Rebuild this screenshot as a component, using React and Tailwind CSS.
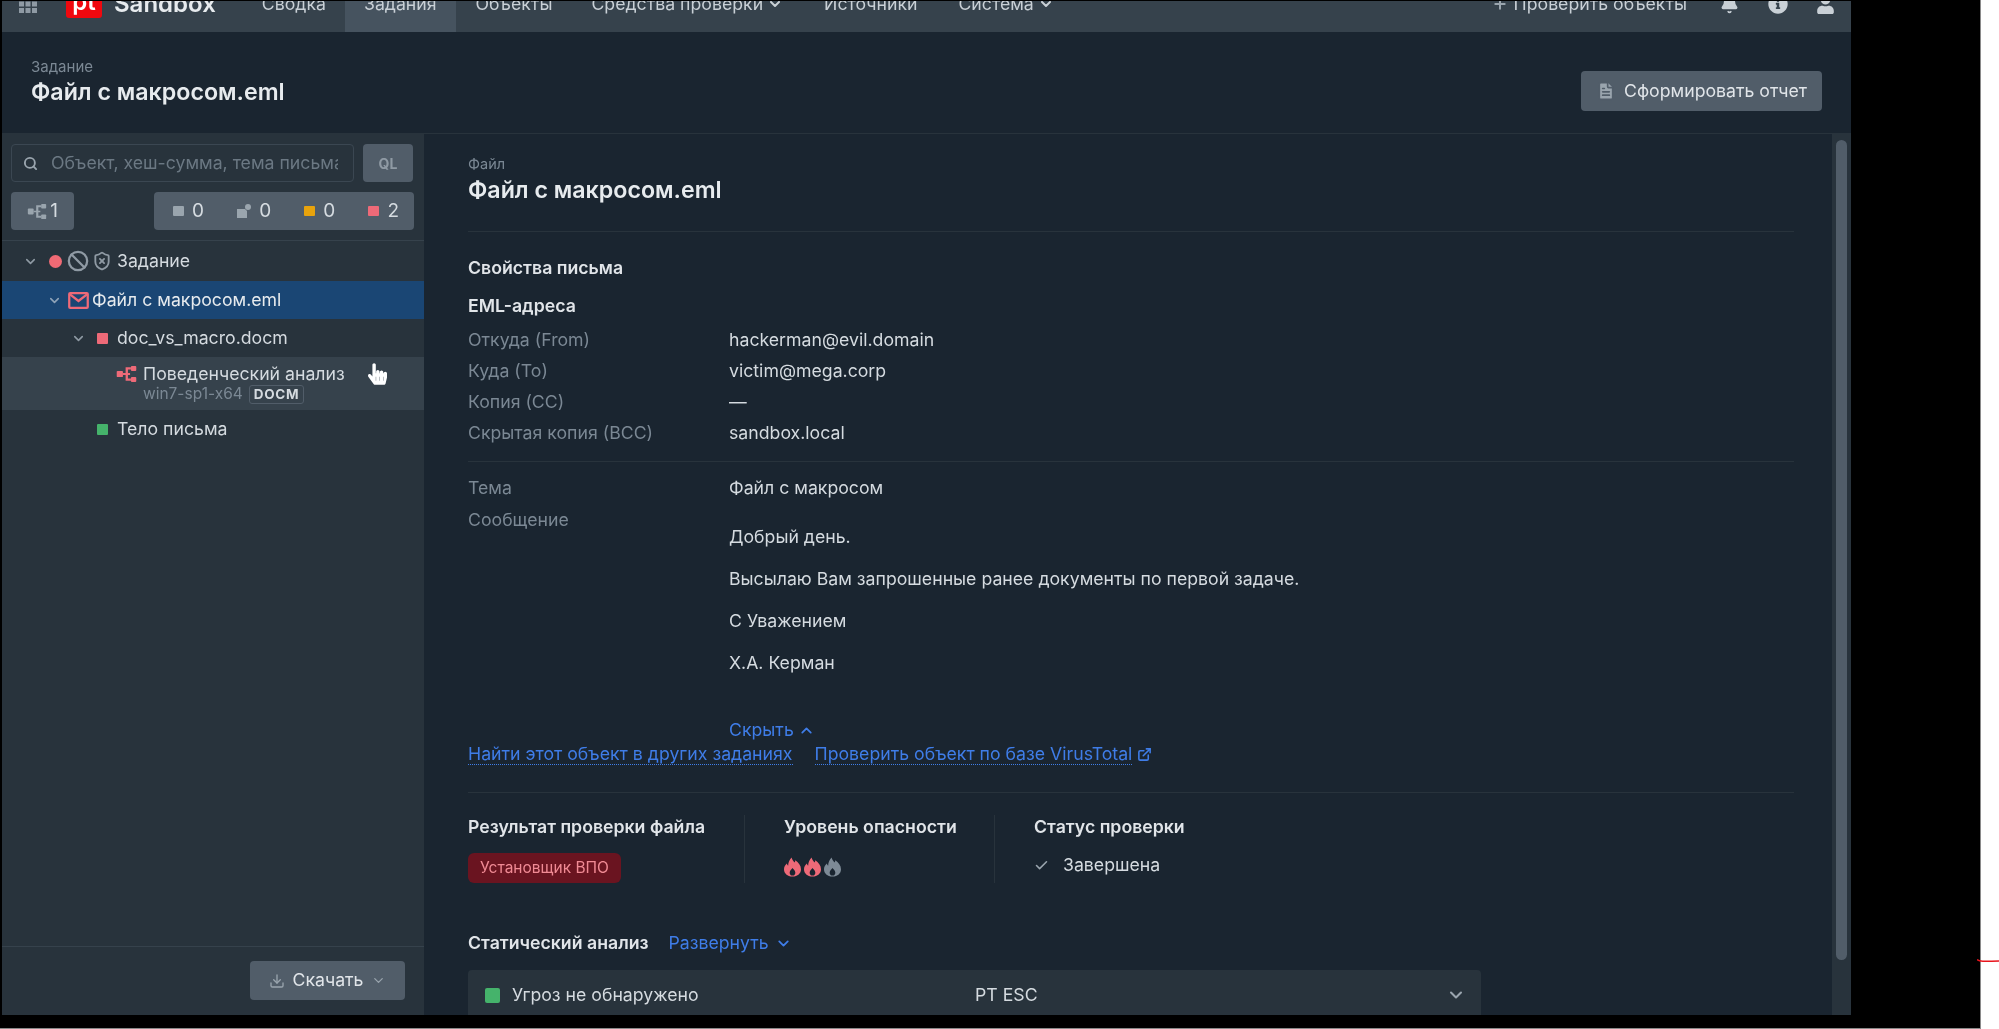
import React from 'react'
import { Ban, Bell, Check, ChevronDown, ChevronUp, ExternalLink, FileText, Plus, Search, ShieldX, Download } from 'lucide-react'
import { FaHandPointer, FaUser, FaInfoCircle } from 'react-icons/fa'

function BranchIcon({ className }) {
    return (
        <svg viewBox="0 0 22 18" className={className} fill="currentColor">
            <rect x="0" y="5.5" width="7" height="7" rx="1" />
            <rect x="16" y="0" width="6" height="5.5" rx="1" />
            <rect x="16" y="12.5" width="6" height="5.5" rx="1" />
            <path d="M7 8h3V1.5h6v2.4h-3.4V8H15v2h-2.4v4.1H16v2.4h-6V10H7z" />
        </svg>
    )
}

function GridIcon({ className }) {
    return (
        <svg viewBox="0 0 18 18" className={className} fill="currentColor">
            <rect x="0" y="0" width="5" height="5" />
            <rect x="6.5" y="0" width="5" height="5" />
            <rect x="13" y="0" width="5" height="5" />
            <rect x="0" y="6.5" width="5" height="5" />
            <rect x="6.5" y="6.5" width="5" height="5" />
            <rect x="13" y="6.5" width="5" height="5" />
            <rect x="0" y="13" width="5" height="5" />
            <rect x="6.5" y="13" width="5" height="5" />
            <rect x="13" y="13" width="5" height="5" />
        </svg>
    )
}

function MailIcon({ className }) {
    return (
        <svg viewBox="0 0 22 18" className={className} fill="none" stroke="currentColor">
            <rect x="1.2" y="1.2" width="19.6" height="15.6" rx="1" strokeWidth="2.4" />
            <path d="M2 2.5l9 7 9-7" strokeWidth="2.4" />
        </svg>
    )
}

function FlameIcon({ className }) {
    return (
        <svg viewBox="0 0 18 20" className={className} fill="currentColor">
            <path fillRule="evenodd" d="M8 0c.6 2.4 1.8 3.8 3.4 5.2.3-.9.5-1.5.5-2.4C15.300 5.200 18 8.300 18 12.300 18 16.700 14.500 20 9 20S0 16.700 0 12.300c0-2.600 1.300-4.500 3-6 .3 1 .6 1.700 1.400 2.300C4.500 5.300 5.800 2.200 8 0zM9 11c-1 1.400-3 2.700-3 5 0 1.400 1 2.500 1.800 3h2.400c.8-.5 1.800-1.600 1.800-3 0-2.300-2-3.600-3-5z" />
        </svg>
    )
}

function NavItem({ label, active, caret, className }) {
    return (
        <div className={`flex h-full items-center gap-1 text-[17.7px] ${active ? 'bg-[#46535f]' : ''} ${className}`}>
            <span>{label}</span>
            {caret && <ChevronDown className="h-4 w-4" strokeWidth={3} />}
        </div>
    )
}

function EmlRow({ label, value }) {
    return (
        <div className="flex h-[31px] items-center text-[17.7px]">
            <span className="w-[261px] text-[#7b8894]">{label}</span>
            <span className="text-[#d5dbe0]">{value}</span>
        </div>
    )
}

function Counter({ children, value }) {
    return (
        <div className="flex items-center gap-[8px]">
            {children}
            <span className="text-[19px] text-[#d5dbe0]">{value}</span>
        </div>
    )
}

export default function App() {
    return (
        <div className="relative flex h-[1029px] w-[1999px] overflow-hidden bg-white font-['Inter',sans-serif]">
            <div className="h-[1029px] w-[1981px] border-r border-b border-[#8a8a8a] bg-black pt-px pl-[2px]">
                <div className="flex h-[1014px] w-[1849px] flex-col overflow-hidden bg-[#1a2530] blur-[0.6px]">
                    <div className="h-[31px] shrink-0 overflow-hidden bg-[#36424c] text-[#c9d0d6]">
                        <div className="-mt-[26px] flex h-[58px] items-center">
                            <GridIcon className="ml-[17px] h-[18px] w-[18px] text-[#8f9aa4]" />
                            <div className="ml-[29px] -mt-[8px] flex h-[36px] w-[36px] items-center justify-center rounded-[3px] bg-[#f0080f] pt-[3px] text-[24px] leading-none font-semibold text-white">pt</div>
                            <span className="ml-[12px] text-[24px] font-semibold text-[#e7ebee]">Sandbox</span>
                            <NavItem label="Сводка" className="ml-[46px]" />
                            <NavItem label="Задания" active className="ml-[19px] px-[19px]" />
                            <NavItem label="Объекты" className="ml-[20px]" />
                            <NavItem label="Средства проверки" caret className="ml-[39px]" />
                            <NavItem label="Источники" className="ml-[41px]" />
                            <NavItem label="Система" caret className="ml-[41px]" />
                            <div className="ml-auto flex items-center gap-[6px] text-[17.7px]">
                                <Plus className="h-4 w-4 text-[#9aa5ae]" strokeWidth={3} />
                                <span>Проверить объекты</span>
                            </div>
                            <Bell className="ml-[33px] h-[19px] w-[19px] fill-[#c9d0d6]" />
                            <FaInfoCircle className="ml-[29px] h-[20px] w-[20px]" />
                            <FaUser className="mr-[16px] ml-[28px] h-[19px] w-[19px]" />
                        </div>
                    </div>

                    <div className="flex h-[102px] shrink-0 items-center justify-between border-b border-[#28333c] pr-[29px] pl-[29px]">
                        <div className="-mt-px">
                            <div className="text-[15px] leading-5 text-[#7b8894]">Задание</div>
                            <div className="text-[23.2px] leading-[30px] font-semibold text-[#e7ebee]">Файл с макросом.eml</div>
                        </div>
                        <div className="mt-[17px] flex h-[40px] w-[241px] items-center justify-center gap-[8px] rounded-[4px] bg-[#515d69] text-[17.7px] text-[#e1e5e9]">
                            <FileText className="h-[20px] w-[20px] fill-[#9aa5ae] text-[#515d69]" />
                            <span>Сформировать отчет</span>
                        </div>
                    </div>

                    <div className="flex min-h-0 flex-1">
                        <div className="flex w-[422px] shrink-0 flex-col bg-[#28333c]">
                            <div className="h-[107px] shrink-0 border-b border-[#36424c] pt-[10px] pr-[10px] pl-[9px]">
                                <div className="flex gap-[9px]">
                                    <div className="flex h-[38px] w-[343px] items-center rounded-[4px] border border-[#3b4752] pl-[11px]">
                                        <Search className="h-[15px] w-[15px] shrink-0 text-[#9aa5ae]" strokeWidth={3} />
                                        <input className="ml-[13px] w-[287px] bg-transparent pt-[1px] text-[17.7px] outline-none placeholder:text-[#6b7883]" placeholder="Объект, хеш-сумма, тема письма" />
                                    </div>
                                    <div className="flex h-[38px] w-[50px] items-center justify-center rounded-[4px] bg-[#515d69] text-[14px] font-bold text-[#8f9aa4]">QL</div>
                                </div>
                                <div className="mt-[10px] flex justify-between">
                                    <div className="flex h-[38px] w-[63px] items-center justify-center gap-[3px] rounded-[4px] bg-[#515d69] text-[19px] text-[#d5dbe0]">
                                        <BranchIcon className="h-[15px] w-[20px] text-[#9aa5ae]" />
                                        <span>1</span>
                                    </div>
                                    <div className="flex h-[38px] w-[260px] items-center justify-between rounded-[4px] bg-[#515d69] pr-[15px] pl-[19px]">
                                        <Counter value="0"><span className="h-[10px] w-[11px] rounded-[1px] bg-[#9aa5ae]" /></Counter>
                                        <Counter value="0">
                                            <svg viewBox="0 0 14 14" className="h-[14px] w-[14px] fill-[#9aa5ae]"><path d="M0 5h8l2 2v7H0z" /><circle cx="11" cy="3" r="3" /></svg>
                                        </Counter>
                                        <Counter value="0"><span className="h-[10px] w-[11px] rounded-[1px] bg-[#e8a30c]" /></Counter>
                                        <Counter value="2"><span className="h-[10px] w-[11px] rounded-[1px] bg-[#ee6a78]" /></Counter>
                                    </div>
                                </div>
                            </div>

                            <div className="flex-1 text-[17.7px] text-[#d5dbe0]">
                                <div className="flex h-[40px] items-center pl-[21px]">
                                    <ChevronDown className="h-[15px] w-[15px] text-[#8f9aa4]" strokeWidth={2.5} />
                                    <span className="ml-[11px] h-[13px] w-[13px] rounded-full bg-[#f06a75]" />
                                    <Ban className="ml-[5px] h-[22px] w-[22px] text-[#8f9aa4]" strokeWidth={2.5} />
                                    <ShieldX className="ml-[3px] h-[20px] w-[20px] text-[#8f9aa4]" strokeWidth={2.2} />
                                    <span className="ml-[5px]">Задание</span>
                                </div>
                                <div className="flex h-[38px] items-center bg-[#1a4674] pl-[45px]">
                                    <ChevronDown className="h-[15px] w-[15px] text-[#8fa3b8]" strokeWidth={2.5} />
                                    <MailIcon className="ml-[6px] h-[17px] w-[21px] text-[#ee6a78]" />
                                    <span className="ml-[3px] text-[#e7ebee]">Файл с макросом.eml</span>
                                </div>
                                <div className="flex h-[38px] items-center pl-[69px]">
                                    <ChevronDown className="h-[15px] w-[15px] text-[#8f9aa4]" strokeWidth={2.5} />
                                    <span className="ml-[11px] h-[11px] w-[11px] rounded-[1px] bg-[#ee6a78]" />
                                    <span className="ml-[9px]">doc_vs_macro.docm</span>
                                </div>
                                <div className="flex h-[53px] bg-[#36424c] pt-[6px] pl-[114px]">
                                    <BranchIcon className="mt-[3px] h-[16px] w-[21px] text-[#ee6a78]" />
                                    <div className="ml-[6px]">
                                        <div className="leading-[21px]">Поведенческий анализ</div>
                                        <div className="flex items-center gap-[6px] text-[15.5px] leading-[20px] text-[#7b8894]">
                                            <span>win7-sp1-x64</span>
                                            <span className="rounded-[3px] border border-[#515d69] px-[4px] text-[13.5px] leading-[17px] font-bold tracking-wider text-[#d5dbe0]">DOCM</span>
                                        </div>
                                    </div>
                                </div>
                                <div className="flex h-[39px] items-center pl-[95px]">
                                    <span className="h-[11px] w-[11px] rounded-[1px] bg-[#45b36b]" />
                                    <span className="ml-[9px]">Тело письма</span>
                                </div>
                            </div>

                            <div className="flex h-[69px] shrink-0 justify-end border-t border-[#36424c] pt-[14px] pr-[19px]">
                                <div className="flex h-[39px] w-[155px] items-center justify-center gap-[8px] rounded-[4px] bg-[#515d69] text-[17.7px] text-[#e1e5e9]">
                                    <Download className="h-[16px] w-[16px] text-[#9aa5ae]" />
                                    <span>Скачать</span>
                                    <ChevronDown className="h-[15px] w-[15px] text-[#9aa5ae]" />
                                </div>
                            </div>
                        </div>

                        <div className="flex min-w-0 flex-1">
                            <div className="min-w-0 flex-1 overflow-hidden pr-[38px] pl-[44px] text-[17.7px] text-[#d5dbe0]">
                                <div className="mt-[20px] text-[14.5px] leading-5 text-[#7b8894]">Файл</div>
                                <div className="mt-[1px] text-[23.2px] leading-[30px] font-semibold text-[#e7ebee]">Файл с макросом.eml</div>
                                <div className="mt-[26px] border-t border-[#28333c]" />
                                <div className="mt-[24px] leading-6 font-semibold text-[#e1e5e9]">Свойства письма</div>
                                <div className="mt-[14px] leading-6 font-semibold text-[#e1e5e9]">EML-адреса</div>
                                <div className="mt-[7px]">
                                    <EmlRow label="Откуда (From)" value="hackerman@evil.domain" />
                                    <EmlRow label="Куда (To)" value="victim@mega.corp" />
                                    <EmlRow label="Копия (CC)" value="—" />
                                    <EmlRow label="Скрытая копия (BCC)" value="sandbox.local" />
                                </div>
                                <div className="mt-[12px] border-t border-[#28333c]" />
                                <div className="mt-[11px]">
                                    <EmlRow label="Тема" value="Файл с макросом" />
                                </div>
                                <div className="flex">
                                    <span className="h-[31px] w-[261px] leading-[31px] text-[#7b8894]">Сообщение</span>
                                    <div className="flex flex-col gap-[18px] pt-[21px] leading-6">
                                        <p>Добрый день.</p>
                                        <p>Высылаю Вам запрошенные ранее документы по первой задаче.</p>
                                        <p>С Уважением</p>
                                        <p>Х.А. Керман</p>
                                    </div>
                                </div>
                                <div className="mt-[43px] flex h-6 items-center gap-[4px] pl-[261px] text-[#3f7de8]">
                                    <span>Скрыть</span>
                                    <ChevronUp className="h-[17px] w-[17px]" strokeWidth={2.5} />
                                </div>
                                <div className="flex h-6 items-center gap-[22px] text-[#3f7de8]">
                                    <span className="border-b border-dotted border-[#3f7de8] leading-[21px]">Найти этот объект в других заданиях</span>
                                    <span className="flex items-center gap-[5px]">
                                        <span className="border-b border-dotted border-[#3f7de8] leading-[21px]">Проверить объект по базе VirusTotal</span>
                                        <ExternalLink className="h-[15px] w-[15px]" strokeWidth={2.5} />
                                    </span>
                                </div>
                                <div className="mt-[26px] border-t border-[#28333c]" />

                                <div className="mt-[22px] flex">
                                    <div className="w-[277px] border-r border-[#28333c]">
                                        <div className="leading-6 font-semibold text-[#e1e5e9]">Результат проверки файла</div>
                                        <div className="mt-[14px] flex h-[30px] w-[153px] items-center justify-center rounded-[6px] bg-[#6a1420] text-[15.5px] text-[#f08a94]">Установщик ВПО</div>
                                    </div>
                                    <div className="w-[250px] border-r border-[#28333c] pl-[39px]">
                                        <div className="leading-6 font-semibold text-[#e1e5e9]">Уровень опасности</div>
                                        <div className="mt-[18px] flex gap-[3px]">
                                            <FlameIcon className="h-[20px] w-[17px] text-[#ee6a78]" />
                                            <FlameIcon className="h-[20px] w-[17px] text-[#ee6a78]" />
                                            <FlameIcon className="h-[20px] w-[17px] text-[#7d8a96]" />
                                        </div>
                                    </div>
                                    <div className="pl-[39px]">
                                        <div className="leading-6 font-semibold text-[#e1e5e9]">Статус проверки</div>
                                        <div className="mt-[14px] flex h-[24px] items-center gap-[14px]">
                                            <Check className="h-[15px] w-[15px] text-[#9aa5ae]" strokeWidth={2.5} />
                                            <span>Завершена</span>
                                        </div>
                                    </div>
                                </div>

                                <div className="mt-[48px] flex h-6 items-center gap-[20px]">
                                    <span className="font-semibold text-[#e1e5e9]">Статический анализ</span>
                                    <span className="flex items-center gap-[6px] text-[#3f7de8]">
                                        Развернуть
                                        <ChevronDown className="h-[17px] w-[17px]" strokeWidth={2.5} />
                                    </span>
                                </div>
                                <div className="mt-[15px] flex h-[50px] w-[1013px] items-center rounded-t-[4px] bg-[#28333c] pr-[15px] pl-[17px]">
                                    <span className="h-[15px] w-[15px] rounded-[2px] bg-[#45b36b]" />
                                    <span className="ml-[12px] w-[463px]">Угроз не обнаружено</span>
                                    <span>PT ESC</span>
                                    <ChevronDown className="ml-auto h-[20px] w-[20px] text-[#9aa5ae]" strokeWidth={2.5} />
                                </div>
                            </div>
                            <div className="w-[19px] shrink-0 bg-[#28333c] pt-[6px] pl-[4px]">
                                <div className="h-[820px] w-[11px] rounded-full bg-[#515d69]" />
                            </div>
                        </div>
                    </div>
                </div>
            </div>
            <FaHandPointer className="absolute top-[363px] left-[368px] h-[22px] w-[19px] text-white" />
            <svg viewBox="0 0 22 6" className="absolute top-[958px] left-[1977px] h-[6px] w-[22px]" fill="none" stroke="#e8141c" strokeWidth="1.5">
                <path d="M0 1.5C2 3.5 6 3.5 22 3" />
            </svg>
        </div>
    )
}
